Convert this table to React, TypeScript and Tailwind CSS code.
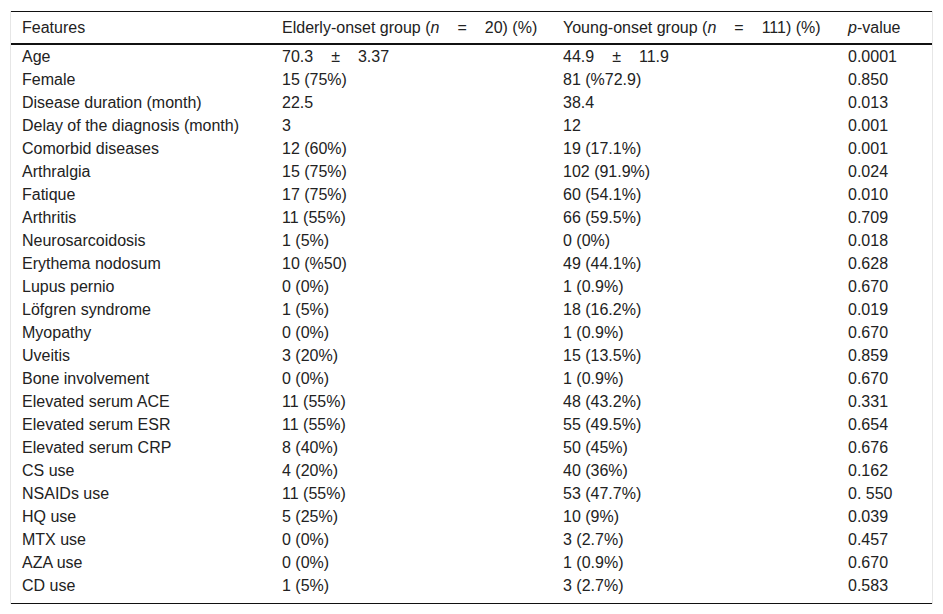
import React from 'react';

interface Row {
  feature: string;
  elderly: React.ReactNode;
  young: React.ReactNode;
  p: string;
}

// wide gap used around "=" and "±" in the source table
const Sp = () => <span className="inline-block w-[18px]" />;

const rows: Row[] = [
  { feature: 'Age', elderly: <>70.3<Sp />±<Sp />3.37</>, young: <>44.9<Sp />±<Sp />11.9</>, p: '0.0001' },
  { feature: 'Female', elderly: '15 (75%)', young: '81 (%72.9)', p: '0.850' },
  { feature: 'Disease duration (month)', elderly: '22.5', young: '38.4', p: '0.013' },
  { feature: 'Delay of the diagnosis (month)', elderly: '3', young: '12', p: '0.001' },
  { feature: 'Comorbid diseases', elderly: '12 (60%)', young: '19 (17.1%)', p: '0.001' },
  { feature: 'Arthralgia', elderly: '15 (75%)', young: '102 (91.9%)', p: '0.024' },
  { feature: 'Fatique', elderly: '17 (75%)', young: '60 (54.1%)', p: '0.010' },
  { feature: 'Arthritis', elderly: '11 (55%)', young: '66 (59.5%)', p: '0.709' },
  { feature: 'Neurosarcoidosis', elderly: '1 (5%)', young: '0 (0%)', p: '0.018' },
  { feature: 'Erythema nodosum', elderly: '10 (%50)', young: '49 (44.1%)', p: '0.628' },
  { feature: 'Lupus pernio', elderly: '0 (0%)', young: '1 (0.9%)', p: '0.670' },
  { feature: 'Löfgren syndrome', elderly: '1 (5%)', young: '18 (16.2%)', p: '0.019' },
  { feature: 'Myopathy', elderly: '0 (0%)', young: '1 (0.9%)', p: '0.670' },
  { feature: 'Uveitis', elderly: '3 (20%)', young: '15 (13.5%)', p: '0.859' },
  { feature: 'Bone involvement', elderly: '0 (0%)', young: '1 (0.9%)', p: '0.670' },
  { feature: 'Elevated serum ACE', elderly: '11 (55%)', young: '48 (43.2%)', p: '0.331' },
  { feature: 'Elevated serum ESR', elderly: '11 (55%)', young: '55 (49.5%)', p: '0.654' },
  { feature: 'Elevated serum CRP', elderly: '8 (40%)', young: '50 (45%)', p: '0.676' },
  { feature: 'CS use', elderly: '4 (20%)', young: '40 (36%)', p: '0.162' },
  { feature: 'NSAIDs use', elderly: '11 (55%)', young: '53 (47.7%)', p: '0. 550' },
  { feature: 'HQ use', elderly: '5 (25%)', young: '10 (9%)', p: '0.039' },
  { feature: 'MTX use', elderly: '0 (0%)', young: '3 (2.7%)', p: '0.457' },
  { feature: 'AZA use', elderly: '0 (0%)', young: '1 (0.9%)', p: '0.670' },
  { feature: 'CD use', elderly: '1 (5%)', young: '3 (2.7%)', p: '0.583' },
];

export default function App() {
  return (
    <div className="min-h-screen bg-white pt-[11px] pl-[10px] text-[#222] text-[16px] leading-[23px] font-['Liberation_Sans',Arial,sans-serif]">
      <div className="w-[923px] border-x border-[#e6e6e6]">
        <table className="w-full table-fixed border-collapse text-left">
          <colgroup>
            <col className="w-[261px]" />
            <col className="w-[281px]" />
            <col className="w-[285px]" />
            <col />
          </colgroup>
          <thead>
            <tr className="border-t border-b-2 border-[#111]">
              <th className="h-[32px] pl-[11px] font-normal">Features</th>
              <th className="pl-[10px] font-normal whitespace-nowrap">
                Elderly-onset group (<i>n</i><Sp />=<Sp />20) (%)
              </th>
              <th className="pl-[10px] font-normal whitespace-nowrap">
                Young-onset group (<i>n</i><Sp />=<Sp />111) (%)
              </th>
              <th className="pl-[10px] font-normal whitespace-nowrap">
                <i>p</i>-value
              </th>
            </tr>
          </thead>
          <tbody className="border-b border-[#111]">
            {rows.map((r, i) => {
              const last = i === rows.length - 1 ? 'pb-[6px]' : '';
              return (
                <tr key={r.feature}>
                  <td className={`h-[23px] pl-[11px] whitespace-nowrap ${last}`}>{r.feature}</td>
                  <td className={`pl-[10px] ${last}`}>{r.elderly}</td>
                  <td className={`pl-[10px] ${last}`}>{r.young}</td>
                  <td className={`pl-[10px] ${last}`}>{r.p}</td>
                </tr>
              );
            })}
          </tbody>
        </table>
      </div>
    </div>
  );
}
